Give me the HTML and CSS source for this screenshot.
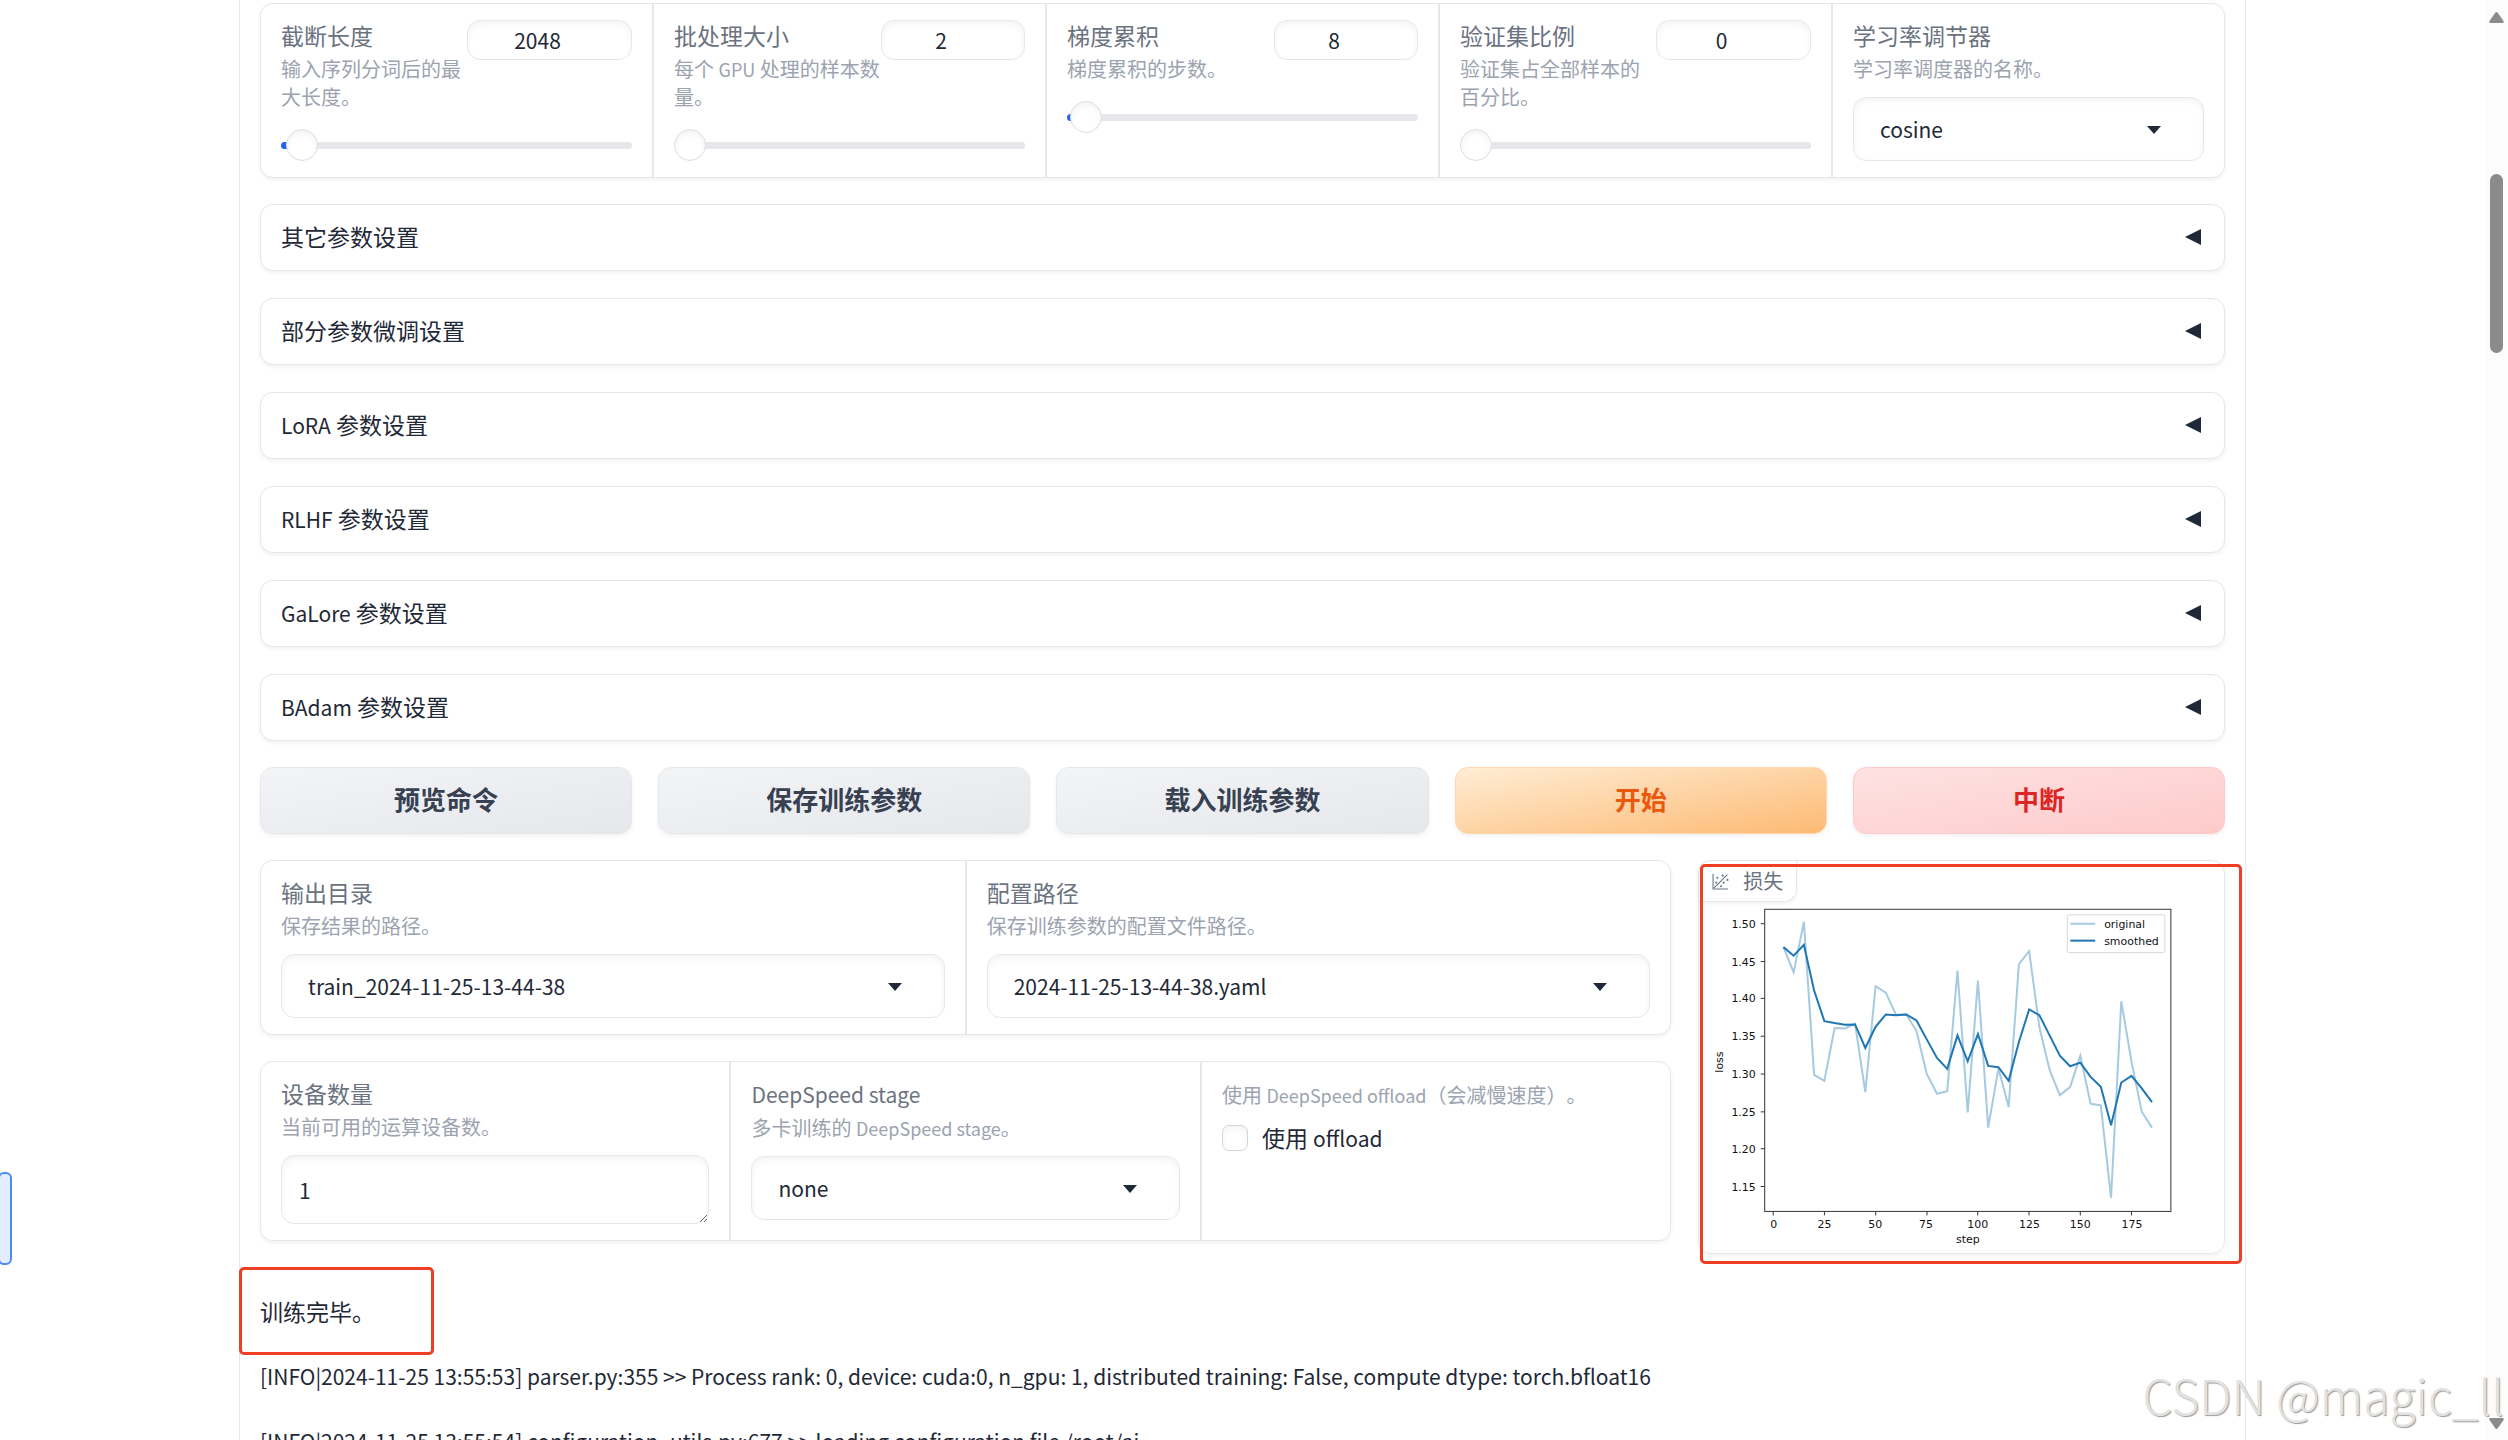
FILE: index.html
```html
<!DOCTYPE html>
<html lang="zh-CN">
<head>
<meta charset="utf-8">
<title>LLaMA Board</title>
<link rel="stylesheet" href="styles.css">
</head>
<body>
<div class="viewport">
<main class="app">

  <section class="form five">
    <div class="cell">
      <div class="head">
        <div class="caption"><label class="title" for="cutoff">截断长度</label><p class="info">输入序列分词后的最大长度。</p></div>
        <input class="num wide" id="cutoff" type="number" value="2048">
      </div>
      <input class="range" type="range" min="0" max="1000" value="17" aria-label="截断长度" style="--fill:3%">
    </div>
    <div class="cell">
      <div class="head">
        <div class="caption"><label class="title" for="batch">批处理大小</label><p class="info">每个 <span class="en">GPU</span> 处理的样本数量。</p></div>
        <input class="num" id="batch" type="number" value="2">
      </div>
      <input class="range" type="range" min="0" max="1000" value="1" aria-label="批处理大小" style="--fill:0%">
    </div>
    <div class="cell">
      <div class="head">
        <div class="caption"><label class="title" for="accum">梯度累积</label><p class="info">梯度累积的步数。</p></div>
        <input class="num" id="accum" type="number" value="8">
      </div>
      <input class="range" type="range" min="0" max="1000" value="8" aria-label="梯度累积" style="--fill:2%">
    </div>
    <div class="cell">
      <div class="head">
        <div class="caption"><label class="title" for="val">验证集比例</label><p class="info">验证集占全部样本的百分比。</p></div>
        <input class="num mid" id="val" type="number" value="0">
      </div>
      <input class="range" type="range" min="0" max="1000" value="0" aria-label="验证集比例" style="--fill:0%">
    </div>
    <div class="cell">
      <label class="title" for="sched">学习率调节器</label>
      <p class="info">学习率调度器的名称。</p>
      <div class="drop"><select id="sched"><option>cosine</option></select><svg class="caret" viewBox="0 0 14 8"><path d="M0 0h14L7 8z"/></svg></div>
    </div>
  </section>

  <section class="accordions">
    <button class="accordion"><span>其它参数设置</span><svg class="arrow" viewBox="0 0 16 16"><path d="M16 0v16L0 8z"/></svg></button>
    <button class="accordion"><span>部分参数微调设置</span><svg class="arrow" viewBox="0 0 16 16"><path d="M16 0v16L0 8z"/></svg></button>
    <button class="accordion"><span><span class="en">LoRA</span> 参数设置</span><svg class="arrow" viewBox="0 0 16 16"><path d="M16 0v16L0 8z"/></svg></button>
    <button class="accordion"><span><span class="en">RLHF</span> 参数设置</span><svg class="arrow" viewBox="0 0 16 16"><path d="M16 0v16L0 8z"/></svg></button>
    <button class="accordion"><span><span class="en">GaLore</span> 参数设置</span><svg class="arrow" viewBox="0 0 16 16"><path d="M16 0v16L0 8z"/></svg></button>
    <button class="accordion"><span><span class="en">BAdam</span> 参数设置</span><svg class="arrow" viewBox="0 0 16 16"><path d="M16 0v16L0 8z"/></svg></button>
  </section>

  <section class="actions">
    <button class="btn">预览命令</button>
    <button class="btn">保存训练参数</button>
    <button class="btn">载入训练参数</button>
    <button class="btn primary">开始</button>
    <button class="btn stop">中断</button>
  </section>

  <section class="results">
    <div class="settings">
      <div class="form two">
        <div class="cell">
          <label class="title" for="outdir">输出目录</label>
          <p class="info">保存结果的路径。</p>
          <div class="drop"><select id="outdir"><option>train_2024-11-25-13-44-38</option></select><svg class="caret" viewBox="0 0 14 8"><path d="M0 0h14L7 8z"/></svg></div>
        </div>
        <div class="cell">
          <label class="title" for="config">配置路径</label>
          <p class="info">保存训练参数的配置文件路径。</p>
          <div class="drop"><select id="config"><option>2024-11-25-13-44-38.yaml</option></select><svg class="caret" viewBox="0 0 14 8"><path d="M0 0h14L7 8z"/></svg></div>
        </div>
      </div>
      <div class="form three">
        <div class="cell">
          <label class="title" for="devices">设备数量</label>
          <p class="info">当前可用的运算设备数。</p>
          <textarea id="devices" rows="1">1</textarea>
        </div>
        <div class="cell">
          <label class="title" for="stage"><span class="en">DeepSpeed stage</span></label>
          <p class="info">多卡训练的 <span class="en">DeepSpeed stage</span>。</p>
          <div class="drop"><select id="stage"><option>none</option></select><svg class="caret" viewBox="0 0 14 8"><path d="M0 0h14L7 8z"/></svg></div>
        </div>
        <div class="cell">
          <p class="info">使用 <span class="en">DeepSpeed offload</span>（会减慢速度）。</p>
          <label class="check"><input type="checkbox"><span>使用 <span class="en">offload</span></span></label>
        </div>
      </div>
    </div>

    <figure class="plot">
      <figcaption class="tab">
        <svg class="tab-icon" viewBox="0 0 32 32"><path d="M2 2v28h28M4 28 29 3" fill="none" stroke="currentColor" stroke-width="2"/><circle cx="10" cy="9" r="2"/><circle cx="20" cy="5" r="2"/><circle cx="29" cy="13" r="2"/><circle cx="22" cy="18" r="2"/><circle cx="17" cy="25" r="2"/><circle cx="8" cy="18" r="2"/></svg>
        <span>损失</span>
      </figcaption>
      <svg class="chart" viewBox="0 0 527 394" role="img" aria-label="loss / step">
        <g class="line" transform="translate(74.5 -11.5) scale(2.057 .33333)">
          <polyline class="original" points="5,294 10,370 15,218 20,679 25,697 30,538 35,539 40,525 45,731 50,412 55,431 60,498 65,497 70,547 75,676 80,736 85,728 90,365 95,792 100,395 105,838 110,660 115,776 120,345 125,306 130,535 135,664 140,740 145,716 150,621 155,766 160,771 165,1050 170,457 175,640 180,790 185,838"/>
          <polyline class="smoothed" points="5,294 10,320 15,287 20,425 25,517 30,523 35,528 40,527 45,598 50,534 55,497 60,499 65,497 70,515 75,572 80,628 85,661 90,560 95,638 100,556 105,652 110,656 115,697 120,580 125,482 130,499 135,560 140,621 145,653 150,642 155,685 160,715 165,831 170,702 175,682 180,720 185,761"/>
        </g>
        <rect class="axes" x="66" y="48.5" width="408" height="303.5"/>
        <path class="axes" d="M62 63h4M62 101h4M62 138h4M62 176h4M62 214h4M62 252h4M62 289h4M62 327h4M74.500 352v4M126 352v4M177.500 352v4M229 352v4M280 352v4M331.500 352v4M383 352v4M434.500 352v4"/>
        <g text-anchor="end">
          <text x="57" y="67">1.50</text><text x="57" y="105">1.45</text><text x="57" y="142">1.40</text><text x="57" y="180">1.35</text>
          <text x="57" y="218">1.30</text><text x="57" y="256">1.25</text><text x="57" y="293">1.20</text><text x="57" y="331">1.15</text>
        </g>
        <g text-anchor="middle">
          <text x="75" y="369">0</text><text x="126" y="369">25</text><text x="177" y="369">50</text><text x="228" y="369">75</text>
          <text x="280" y="369">100</text><text x="332" y="369">125</text><text x="383" y="369">150</text><text x="435" y="369">175</text>
          <text x="270" y="384">step</text>
          <text transform="translate(24 202) rotate(-90)">loss</text>
        </g>
        <rect class="legend" x="370" y="54" width="98" height="38" rx="2"/>
        <path class="original" d="M373 63h25"/><path class="smoothed" d="M373 80h25"/>
        <text x="407" y="67">original</text><text x="407" y="84">smoothed</text>
      </svg>
      <div class="mark mark-plot"></div>
    </figure>
  </section>

  <section class="log">
    <p>训练完毕。</p>
    <p class="en">[INFO|2024-11-25 13:55:53] parser.py:355 &gt;&gt; Process rank: 0, device: cuda:0, n_gpu: 1, distributed training: False, compute dtype: torch.bfloat16</p>
    <p class="en">[INFO|2024-11-25 13:55:54] configuration_utils.py:677 &gt;&gt; loading configuration file /root/ai</p>
    <div class="mark mark-done"></div>
  </section>
</main>
<div class="scrollbar">
  <svg viewBox="0 0 15 11"><path d="M6 1q1.500-2 3 0l5.500 8q.8 2-1 2h-12q-1.800 0-1-2z"/></svg>
  <div class="track"><div class="thumb"></div></div>
  <svg viewBox="0 0 15 11"><path d="M6 10q1.500 2 3 0l5.500-8q.8-2-1-2h-12q-1.800 0-1 2z"/></svg>
</div>
<div class="side-tab"></div>
<div class="watermark">CSDN @magic_ll</div>
</div>
</body>
</html>
```
FILE: styles.css
```css
* { box-sizing: border-box; }

:root {
  --line: #e5e7eb;
  --text: #1f2937;
  --label: #6b7280;
  --muted: #9ca3af;
  --inset: inset 0 3px 6px rgba(0, 0, 0, .05);
  --drop: 0 2px 4px rgba(0, 0, 0, .06);
}

body, p, figure { margin: 0; }

body {
  background: #fff;
  color: var(--text);
  font: 23px/32px "Noto Sans CJK SC", sans-serif;
  text-spacing-trim: space-all;
}

button, input, select, textarea { font: inherit; color: inherit; }

.en { font-size: 21px; }

.viewport {
  position: relative;
  display: flex;
  height: 100vh;
  overflow: hidden;
}

.app {
  flex: 0 1 2007px;
  min-width: 0;
  margin: 0 auto;
  padding: 3px 20px 0;
  border: solid var(--line);
  border-width: 0 1px;
  display: flex;
  flex-direction: column;
  gap: 26px;
  height: max-content;
}

/* Form groups */
.form {
  display: grid;
  gap: 2px;
  background: var(--line);
  border: 1px solid var(--line);
  border-radius: 13px;
  box-shadow: var(--drop);
  overflow: hidden;
}
.five { grid-template-columns: repeat(5, minmax(0, 1fr)); }
.two { grid-template-columns: repeat(2, minmax(0, 1fr)); }
.three { grid-template-columns: repeat(3, minmax(0, 1fr)); }

.cell { background: #fff; padding: 15px 20px 16px; }

.title { display: block; color: var(--label); }
.info {
  color: var(--muted);
  font-size: 20px;
  line-height: 28px;
  padding-top: 4px;
}
.info .en { font-size: 18px; }

.head { display: flex; align-items: flex-start; }
.caption { flex: 1; min-width: 0; }

.num {
  width: 144px;
  height: 40px;
  margin-top: 1px;
  padding: 0 32px 0 8px;
  border: 1px solid var(--line);
  border-radius: 13px;
  background: #fff;
  box-shadow: var(--inset);
  font-size: 21px;
  text-align: center;
  appearance: textfield;
}
.num.wide { width: 165px; }
.num.mid { width: 155px; }
.num::-webkit-inner-spin-button { display: none; }

.range {
  display: block;
  width: 100%;
  height: 32px;
  margin: 18px 0 0;
  appearance: none;
  background: none;
}
.range::-webkit-slider-runnable-track {
  height: 7px;
  border-radius: 4px;
  background: linear-gradient(to right, #2563eb var(--fill), var(--line) var(--fill));
}
.range::-webkit-slider-thumb {
  appearance: none;
  width: 32px;
  height: 32px;
  margin-top: -13px;
  border: 1px solid #dcdee2;
  border-radius: 50%;
  background: #fff;
  box-shadow: var(--inset);
}

.drop { display: grid; margin-top: 14px; }
.drop > * { grid-area: 1 / 1; }
.drop select {
  width: 100%;
  height: 64px;
  padding: 0 60px 0 26px;
  border: 1px solid var(--line);
  border-radius: 13px;
  background: #fff;
  box-shadow: var(--inset);
  font-size: 21px;
  appearance: none;
}
.caret {
  width: 14px;
  height: 8px;
  margin: 2px 43px 0 0;
  align-self: center;
  justify-self: end;
  fill: var(--text);
  pointer-events: none;
}

textarea {
  display: block;
  width: 100%;
  height: 69px;
  margin-top: 14px;
  padding: 18px 17px;
  border: 1px solid var(--line);
  border-radius: 13px;
  box-shadow: var(--inset);
  font-size: 21px;
  resize: vertical;
  overflow: hidden;
}

.check { display: flex; align-items: center; gap: 14px; margin-top: 12px; }
.check input {
  appearance: none;
  width: 26px;
  height: 26px;
  margin: 0;
  border: 1px solid #d1d5db;
  border-radius: 7px;
  box-shadow: var(--inset);
}

/* Accordions */
.accordions { display: flex; flex-direction: column; gap: 27px; }
.accordion {
  display: flex;
  justify-content: space-between;
  align-items: center;
  height: 67px;
  padding: 0 23px 3px 20px;
  border: 1px solid var(--line);
  border-radius: 13px;
  background: #fff;
  box-shadow: var(--drop);
}
.arrow { width: 16px; height: 16px; margin-top: 2px; fill: var(--text); }

/* Action buttons */
.actions { display: grid; grid-template-columns: repeat(5, minmax(0, 1fr)); gap: 26px; }
.btn {
  height: 67px;
  padding: 0 6px 3px;
  border: 1px solid var(--line);
  border-radius: 13px;
  background: linear-gradient(to bottom right, #f3f4f6, #e5e7eb);
  box-shadow: var(--drop);
  color: #374151;
  font-size: 26px;
  font-weight: 700;
}
.primary { border-color: #fed7aa; background: linear-gradient(to bottom right, #ffedd5, #fdba74); color: #ea580c; }
.stop { border-color: #fecaca; background: linear-gradient(to bottom right, #fee2e2, #fecaca); color: #dc2626; }

/* Results */
.results { display: grid; grid-template-columns: 67fr 25fr; gap: 27px; align-items: start; }
.settings { display: flex; flex-direction: column; gap: 26px; min-width: 0; }

.plot {
  position: relative;
  border: 1px solid var(--line);
  border-radius: 13px;
  box-shadow: var(--drop);
}
.tab {
  position: absolute;
  top: 0;
  left: 0;
  display: flex;
  align-items: center;
  gap: 14px;
  height: 41px;
  padding: 0 13px;
  border: solid var(--line);
  border-width: 0 1px 1px 0;
  border-radius: 13px 0 13px 0;
  box-shadow: var(--drop);
  color: var(--label);
  font-size: 20px;
}
.tab-icon { width: 17px; height: 17px; fill: currentColor; }
.chart { display: block; width: 100%; font: 11px "DejaVu Sans", sans-serif; fill: #111; }
.original, .smoothed { fill: none; stroke-width: 2; vector-effect: non-scaling-stroke; }
.original { stroke: #a6cae0; }
.smoothed { stroke: #1f77b4; }
.axes { fill: none; stroke: #333; }
.legend { fill: #fff; stroke: #d8d8d8; }

/* Hand-drawn highlight frames */
.mark { position: absolute; border: 3px solid #ee3f24; border-radius: 5px; pointer-events: none; }
.mark-plot { inset: 3px -18px -11px 1px; }
.mark-done { left: -21px; top: -13px; width: 195px; height: 88px; }

/* Log */
.log {
  position: relative;
  display: flex;
  flex-direction: column;
  gap: 25px;
  padding-top: 11px;
  line-height: 40px;
  white-space: nowrap;
}

/* Window chrome */
.scrollbar {
  flex: none;
  width: 23px;
  padding: 12px 4px 11px;
  background: #fcfcfc;
  display: flex;
  flex-direction: column;
  align-items: center;
}
.scrollbar svg { width: 15px; height: 11px; fill: #8b8b8b; }
.track { flex: 1; padding-top: 151px; }
.thumb { width: 13px; height: 179px; border-radius: 7px; background: #8b8b8b; }

.side-tab {
  position: absolute;
  left: -2px;
  top: 1172px;
  width: 14px;
  height: 93px;
  border: 2px solid #4a8cf7;
  border-radius: 6px;
  background: #e3edff;
}
.watermark {
  position: absolute;
  right: 4px;
  bottom: 14px;
  color: #e2e2e2;
  font-size: 48px;
  font-weight: 300;
  line-height: 64px;
  text-shadow: 1px 1px 1px #999;
}
```
